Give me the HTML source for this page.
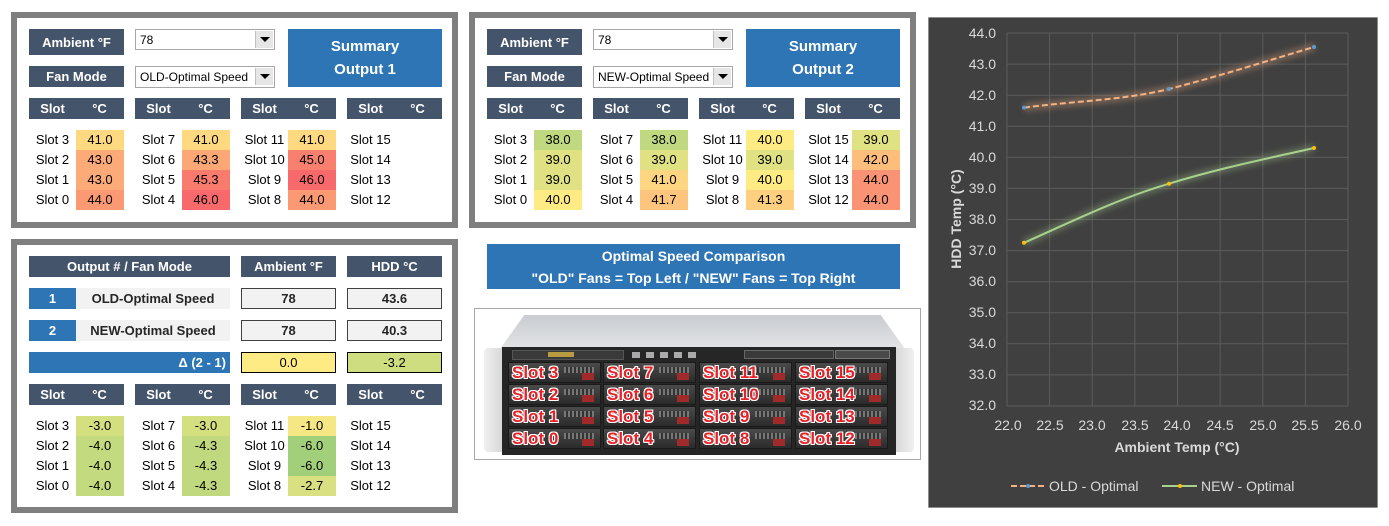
<!DOCTYPE html>
<html><head><meta charset="utf-8">
<style>
*{margin:0;padding:0;box-sizing:border-box}
body{width:1389px;height:526px;background:#fff;position:relative;overflow:hidden;font-family:"Liberation Sans",sans-serif;color:#000}
.a{position:absolute}
.pan{position:absolute;border:6px solid #7f7f7f;background:#fff}
.h{position:absolute;background:#44546a;color:#fff;font-weight:bold;font-size:13px;display:flex;align-items:center;justify-content:center;height:21px}
.h2{position:absolute;background:#44546a;color:#fff;font-weight:bold;font-size:13px;height:21px;width:95px}
.h2 span{position:absolute;top:3px;width:47px;text-align:center}
.dd{position:absolute;width:140px;height:21px;border:1px solid #a6a6a6;background:#fff;font-size:12px;padding:3px 0 0 4px}
.dd i{position:absolute;right:1px;top:1px;width:18px;height:17px;background:#e6e6e6;border-left:1px solid #c0c0c0}
.dd i:after{content:"";position:absolute;left:4px;top:6px;border-left:5px solid transparent;border-right:5px solid transparent;border-top:5px solid #000}
.sum{position:absolute;background:#2e75b6;color:#fff;font-weight:bold;font-size:15px;text-align:center;line-height:23px;padding-top:6px;width:154px;height:58px}
.g{position:absolute;width:95px;font-size:13px}
.g div{height:20px;display:flex}
.g b{font-weight:normal;width:47px;text-align:center;line-height:20px;white-space:nowrap}
.g u{text-decoration:none;width:48px;text-align:center;line-height:20px}
.box{position:absolute;width:95px;height:21px;border:1px solid #404040;background:#f2f2f2;font-weight:bold;font-size:13px;text-align:center;line-height:19px;color:#262626}
.bay{position:absolute;width:93px;height:21px;background:linear-gradient(#4a4a4a,#2b2b2b);border:1px solid #1a1a1a}
.bay:before{content:"";position:absolute;left:55px;top:4px;width:30px;height:6px;background:repeating-linear-gradient(90deg,#777 0 2px,#333 2px 4px)}
.bay:after{content:"";position:absolute;right:6px;bottom:2px;width:12px;height:7px;background:#a02a2a}
.bay span{position:absolute;left:3px;top:0px;color:#e52227;font-weight:bold;font-size:17px;z-index:2;text-shadow:1px 0 #fff,-1px 0 #fff,0 1px #fff,0 -1px #fff,1px 1px #fff,-1px -1px #fff,1px -1px #fff,-1px 1px #fff;white-space:nowrap}
</style></head><body>

<!-- Panel 1 -->
<div class="pan" style="left:11px;top:12px;width:447px;height:216px"></div>
<div class="h" style="left:29px;top:29px;width:95px;height:26px">Ambient °F</div>
<div class="dd" style="left:135px;top:29px">78<i></i></div>
<div class="h" style="left:29px;top:66px;width:95px">Fan Mode</div>
<div class="dd" style="left:135px;top:66px;height:22px">OLD-Optimal Speed<i></i></div>
<div class="sum" style="left:288px;top:29px">Summary<br>Output 1</div>
<div class="h2" style="left:29px;top:98px"><span style="left:0">Slot</span><span style="left:47px">°C</span></div>
<div class="h2" style="left:135px;top:98px"><span style="left:0">Slot</span><span style="left:47px">°C</span></div>
<div class="h2" style="left:241px;top:98px"><span style="left:0">Slot</span><span style="left:47px">°C</span></div>
<div class="h2" style="left:347px;top:98px"><span style="left:0">Slot</span><span style="left:47px">°C</span></div>
<div class="g" style="left:29px;top:130px"><div><b>Slot 3</b><u style="background:#fed980">41.0</u></div><div><b>Slot 2</b><u style="background:#fcaa77">43.0</u></div><div><b>Slot 1</b><u style="background:#fcaa77">43.0</u></div><div><b>Slot 0</b><u style="background:#fb9a72">44.0</u></div></div>
<div class="g" style="left:135px;top:130px"><div><b>Slot 7</b><u style="background:#fed980">41.0</u></div><div><b>Slot 6</b><u style="background:#fba776">43.3</u></div><div><b>Slot 5</b><u style="background:#f97b6e">45.3</u></div><div><b>Slot 4</b><u style="background:#f8696b">46.0</u></div></div>
<div class="g" style="left:241px;top:130px"><div><b>Slot 11</b><u style="background:#fed980">41.0</u></div><div><b>Slot 10</b><u style="background:#f97f6e">45.0</u></div><div><b>Slot 9</b><u style="background:#f8696b">46.0</u></div><div><b>Slot 8</b><u style="background:#fb9a72">44.0</u></div></div>
<div class="g" style="left:347px;top:130px"><div><b>Slot 15</b></div><div><b>Slot 14</b></div><div><b>Slot 13</b></div><div><b>Slot 12</b></div></div>

<!-- Panel 2 -->
<div class="pan" style="left:469px;top:12px;width:447px;height:216px"></div>
<div class="h" style="left:487px;top:29px;width:95px;height:26px">Ambient °F</div>
<div class="dd" style="left:593px;top:29px">78<i></i></div>
<div class="h" style="left:487px;top:66px;width:95px">Fan Mode</div>
<div class="dd" style="left:593px;top:66px;height:22px">NEW-Optimal Speed<i></i></div>
<div class="sum" style="left:746px;top:29px">Summary<br>Output 2</div>
<div class="h2" style="left:487px;top:98px"><span style="left:0">Slot</span><span style="left:47px">°C</span></div>
<div class="h2" style="left:593px;top:98px"><span style="left:0">Slot</span><span style="left:47px">°C</span></div>
<div class="h2" style="left:699px;top:98px"><span style="left:0">Slot</span><span style="left:47px">°C</span></div>
<div class="h2" style="left:805px;top:98px"><span style="left:0">Slot</span><span style="left:47px">°C</span></div>
<div class="g" style="left:487px;top:130px"><div><b>Slot 3</b><u style="background:#c0d980">38.0</u></div><div><b>Slot 2</b><u style="background:#dfe182">39.0</u></div><div><b>Slot 1</b><u style="background:#dfe182">39.0</u></div><div><b>Slot 0</b><u style="background:#ffeb84">40.0</u></div></div>
<div class="g" style="left:593px;top:130px"><div><b>Slot 7</b><u style="background:#c0d980">38.0</u></div><div><b>Slot 6</b><u style="background:#dfe182">39.0</u></div><div><b>Slot 5</b><u style="background:#fed580">41.0</u></div><div><b>Slot 4</b><u style="background:#fdc47d">41.7</u></div></div>
<div class="g" style="left:699px;top:130px"><div><b>Slot 11</b><u style="background:#ffeb84">40.0</u></div><div><b>Slot 10</b><u style="background:#dfe182">39.0</u></div><div><b>Slot 9</b><u style="background:#ffeb84">40.0</u></div><div><b>Slot 8</b><u style="background:#fdcf7f">41.3</u></div></div>
<div class="g" style="left:805px;top:130px"><div><b>Slot 15</b><u style="background:#dfe182">39.0</u></div><div><b>Slot 14</b><u style="background:#fdbe7c">42.0</u></div><div><b>Slot 13</b><u style="background:#fa9373">44.0</u></div><div><b>Slot 12</b><u style="background:#fa9373">44.0</u></div></div>

<!-- Panel 3 -->
<div class="pan" style="left:11px;top:239px;width:447px;height:274px"></div>
<div class="h" style="left:29px;top:256px;width:201px">Output # / Fan Mode</div>
<div class="h" style="left:241px;top:256px;width:95px">Ambient °F</div>
<div class="h" style="left:347px;top:256px;width:95px">HDD °C</div>
<div class="a" style="left:29px;top:288px;width:47px;height:21px;background:#2e75b6;color:#fff;font-weight:bold;font-size:13px;text-align:center;line-height:21px">1</div>
<div class="a" style="left:76px;top:288px;width:154px;height:21px;background:#f2f2f2;color:#262626;font-weight:bold;font-size:13px;text-align:center;line-height:21px">OLD-Optimal Speed</div>
<div class="a" style="left:29px;top:320px;width:47px;height:21px;background:#2e75b6;color:#fff;font-weight:bold;font-size:13px;text-align:center;line-height:21px">2</div>
<div class="a" style="left:76px;top:320px;width:154px;height:21px;background:#f2f2f2;color:#262626;font-weight:bold;font-size:13px;text-align:center;line-height:21px">NEW-Optimal Speed</div>
<div class="a" style="left:29px;top:352px;width:201px;height:21px;background:#2e75b6;color:#fff;font-weight:bold;font-size:13px;text-align:right;padding-right:4px;line-height:21px">Δ (2 - 1)</div>
<div class="box" style="left:241px;top:288px">78</div>
<div class="box" style="left:347px;top:288px">43.6</div>
<div class="box" style="left:241px;top:320px">78</div>
<div class="box" style="left:347px;top:320px">40.3</div>
<div class="box" style="left:241px;top:352px;background:#ffeb84;border-color:#000;font-weight:normal;color:#000">0.0</div>
<div class="box" style="left:347px;top:352px;background:#cedd80;border-color:#000;font-weight:normal;color:#000">-3.2</div>
<div class="h2" style="left:29px;top:384px"><span style="left:0">Slot</span><span style="left:47px">°C</span></div>
<div class="h2" style="left:135px;top:384px"><span style="left:0">Slot</span><span style="left:47px">°C</span></div>
<div class="h2" style="left:241px;top:384px"><span style="left:0">Slot</span><span style="left:47px">°C</span></div>
<div class="h2" style="left:347px;top:384px"><span style="left:0">Slot</span><span style="left:47px">°C</span></div>
<div class="g" style="left:29px;top:416px"><div><b>Slot 3</b><u style="background:#d4df80">-3.0</u></div><div><b>Slot 2</b><u style="background:#c3da7f">-4.0</u></div><div><b>Slot 1</b><u style="background:#c3da7f">-4.0</u></div><div><b>Slot 0</b><u style="background:#c3da7f">-4.0</u></div></div>
<div class="g" style="left:135px;top:416px"><div><b>Slot 7</b><u style="background:#d4df80">-3.0</u></div><div><b>Slot 6</b><u style="background:#c0d97e">-4.3</u></div><div><b>Slot 5</b><u style="background:#c0d97e">-4.3</u></div><div><b>Slot 4</b><u style="background:#c0d97e">-4.3</u></div></div>
<div class="g" style="left:241px;top:416px"><div><b>Slot 11</b><u style="background:#f5e784">-1.0</u></div><div><b>Slot 10</b><u style="background:#a2d07a">-6.0</u></div><div><b>Slot 9</b><u style="background:#a2d07a">-6.0</u></div><div><b>Slot 8</b><u style="background:#d9e081">-2.7</u></div></div>
<div class="g" style="left:347px;top:416px"><div><b>Slot 15</b></div><div><b>Slot 14</b></div><div><b>Slot 13</b></div><div><b>Slot 12</b></div></div>

<!-- Comparison -->
<div class="a" style="left:487px;top:244px;width:413px;height:45px;background:#2e75b6;color:#fff;font-weight:bold;font-size:14px;text-align:center;line-height:22px;padding-top:1px">Optimal Speed Comparison<br>"OLD" Fans = Top Left / "NEW" Fans = Top Right</div>
<div class="a" style="left:474px;top:308px;width:447px;height:152px;border:1px solid #a6a6a6;background:#fff"></div>
<div class="a" style="left:500px;top:315px;width:405px;height:34px;background:linear-gradient(#c9ccd0,#e2e4e6);clip-path:polygon(6% 0,94% 0,100% 100%,0 100%)"></div>
<div class="a" style="left:484px;top:348px;width:24px;height:104px;background:linear-gradient(90deg,#f0f0f0,#d0d0d0);border-radius:4px"></div>
<div class="a" style="left:890px;top:348px;width:24px;height:104px;background:linear-gradient(90deg,#d0d0d0,#f0f0f0);border-radius:4px"></div>
<div class="a" style="left:502px;top:347px;width:394px;height:108px;background:#262626"></div>
<div class="a" style="left:512px;top:350px;width:112px;height:10px;background:#3a3a3a;border:1px solid #555"></div>
<div class="a" style="left:548px;top:352px;width:26px;height:5px;background:#b89a40"></div>
<div class="a" style="left:632px;top:352px;width:70px;height:6px;background:repeating-linear-gradient(90deg,#aaa 0 8px,#262626 8px 14px)"></div>
<div class="a" style="left:744px;top:350px;width:90px;height:9px;background:#3a3a3a;border:1px solid #666"></div>
<div class="a" style="left:835px;top:350px;width:55px;height:9px;background:#4a4a4a;border:1px solid #777"></div>
<div class="bay" style="left:508px;top:362px"><span>Slot 3</span></div>
<div class="bay" style="left:508px;top:384px"><span>Slot 2</span></div>
<div class="bay" style="left:508px;top:406px"><span>Slot 1</span></div>
<div class="bay" style="left:508px;top:428px"><span>Slot 0</span></div>
<div class="bay" style="left:603px;top:362px"><span>Slot 7</span></div>
<div class="bay" style="left:603px;top:384px"><span>Slot 6</span></div>
<div class="bay" style="left:603px;top:406px"><span>Slot 5</span></div>
<div class="bay" style="left:603px;top:428px"><span>Slot 4</span></div>
<div class="bay" style="left:699px;top:362px"><span>Slot 11</span></div>
<div class="bay" style="left:699px;top:384px"><span>Slot 10</span></div>
<div class="bay" style="left:699px;top:406px"><span>Slot 9</span></div>
<div class="bay" style="left:699px;top:428px"><span>Slot 8</span></div>
<div class="bay" style="left:795px;top:362px"><span>Slot 15</span></div>
<div class="bay" style="left:795px;top:384px"><span>Slot 14</span></div>
<div class="bay" style="left:795px;top:406px"><span>Slot 13</span></div>
<div class="bay" style="left:795px;top:428px"><span>Slot 12</span></div>

<!-- Chart -->
<svg class="a" style="left:928px;top:17px" width="450" height="491" viewBox="928 17 450 491" font-family="Liberation Sans, sans-serif">
<defs><filter id="bl" x="-20%" y="-50%" width="140%" height="200%"><feGaussianBlur stdDeviation="3"/></filter></defs>
<rect x="928" y="17" width="450" height="491" fill="#404040" stroke="#d9d9d9"/>
<g stroke="#5c5c5c" stroke-width="1">
<line x1="1007" y1="33" x2="1348" y2="33"/><line x1="1007" y1="64.1" x2="1348" y2="64.1"/><line x1="1007" y1="95.2" x2="1348" y2="95.2"/><line x1="1007" y1="126.2" x2="1348" y2="126.2"/><line x1="1007" y1="157.3" x2="1348" y2="157.3"/><line x1="1007" y1="188.4" x2="1348" y2="188.4"/><line x1="1007" y1="219.5" x2="1348" y2="219.5"/><line x1="1007" y1="250.6" x2="1348" y2="250.6"/><line x1="1007" y1="281.7" x2="1348" y2="281.7"/><line x1="1007" y1="312.7" x2="1348" y2="312.7"/><line x1="1007" y1="343.8" x2="1348" y2="343.8"/><line x1="1007" y1="374.9" x2="1348" y2="374.9"/><line x1="1007" y1="406" x2="1348" y2="406"/>
<line x1="1007" y1="33" x2="1007" y2="406"/><line x1="1049.6" y1="33" x2="1049.6" y2="406"/><line x1="1092.2" y1="33" x2="1092.2" y2="406"/><line x1="1134.9" y1="33" x2="1134.9" y2="406"/><line x1="1177.5" y1="33" x2="1177.5" y2="406"/><line x1="1220.1" y1="33" x2="1220.1" y2="406"/><line x1="1262.8" y1="33" x2="1262.8" y2="406"/><line x1="1305.4" y1="33" x2="1305.4" y2="406"/><line x1="1348" y1="33" x2="1348" y2="406"/>
</g>
<g fill="#d9d9d9" font-size="14" text-anchor="end">
<text x="996" y="38">44.0</text><text x="996" y="69">43.0</text><text x="996" y="100">42.0</text><text x="996" y="131">41.0</text><text x="996" y="162">40.0</text><text x="996" y="193">39.0</text><text x="996" y="224">38.0</text><text x="996" y="255">37.0</text><text x="996" y="286">36.0</text><text x="996" y="317">35.0</text><text x="996" y="348">34.0</text><text x="996" y="379">33.0</text><text x="996" y="410">32.0</text>
</g>
<g fill="#d9d9d9" font-size="14" text-anchor="middle">
<text x="1008" y="430">22.0</text><text x="1050" y="430">22.5</text><text x="1092" y="430">23.0</text><text x="1135" y="430">23.5</text><text x="1177" y="430">24.0</text><text x="1220" y="430">24.5</text><text x="1263" y="430">25.0</text><text x="1305" y="430">25.5</text><text x="1348" y="430">26.0</text>
</g>
<text x="1177" y="452" fill="#d9d9d9" font-size="14" font-weight="bold" text-anchor="middle">Ambient Temp (°C)</text>
<text transform="translate(961,219) rotate(-90)" fill="#d9d9d9" font-size="14" font-weight="bold" text-anchor="middle">HDD Temp (°C)</text>
<path d="M1024,107.6 C1075,101 1125,100 1169,89 C1220,76 1270,60 1314,47" fill="none" stroke="#f4b183" stroke-width="8" opacity="0.3" filter="url(#bl)"/>
<path d="M1024,242.8 C1075,220 1120,198 1169,183.7 C1220,168 1270,158 1314,148" fill="none" stroke="#a9d18e" stroke-width="8" opacity="0.3" filter="url(#bl)"/>
<path d="M1024,107.6 C1075,101 1125,100 1169,89 C1220,76 1270,60 1314,47" fill="none" stroke="#f4b183" stroke-width="2" stroke-dasharray="6,3"/>
<path d="M1024,242.8 C1075,220 1120,198 1169,183.7 C1220,168 1270,158 1314,148" fill="none" stroke="#a9d18e" stroke-width="2"/>
<g fill="#5b9bd5"><circle cx="1024" cy="107.6" r="2"/><circle cx="1169" cy="89" r="2"/><circle cx="1314" cy="47" r="2"/></g>
<g fill="#ffc000"><circle cx="1024" cy="242.8" r="2"/><circle cx="1169" cy="183.7" r="2"/><circle cx="1314" cy="148" r="2"/></g>
<line x1="1011" y1="486" x2="1045" y2="486" stroke="#f4b183" stroke-width="2" stroke-dasharray="6,3"/><circle cx="1028" cy="486" r="2" fill="#5b9bd5"/>
<text x="1049" y="491" fill="#d9d9d9" font-size="14">OLD - Optimal</text>
<line x1="1162" y1="486" x2="1197" y2="486" stroke="#a9d18e" stroke-width="2"/><circle cx="1180" cy="486" r="2" fill="#ffc000"/>
<text x="1201" y="491" fill="#d9d9d9" font-size="14">NEW - Optimal</text>
</svg>
</body></html>
